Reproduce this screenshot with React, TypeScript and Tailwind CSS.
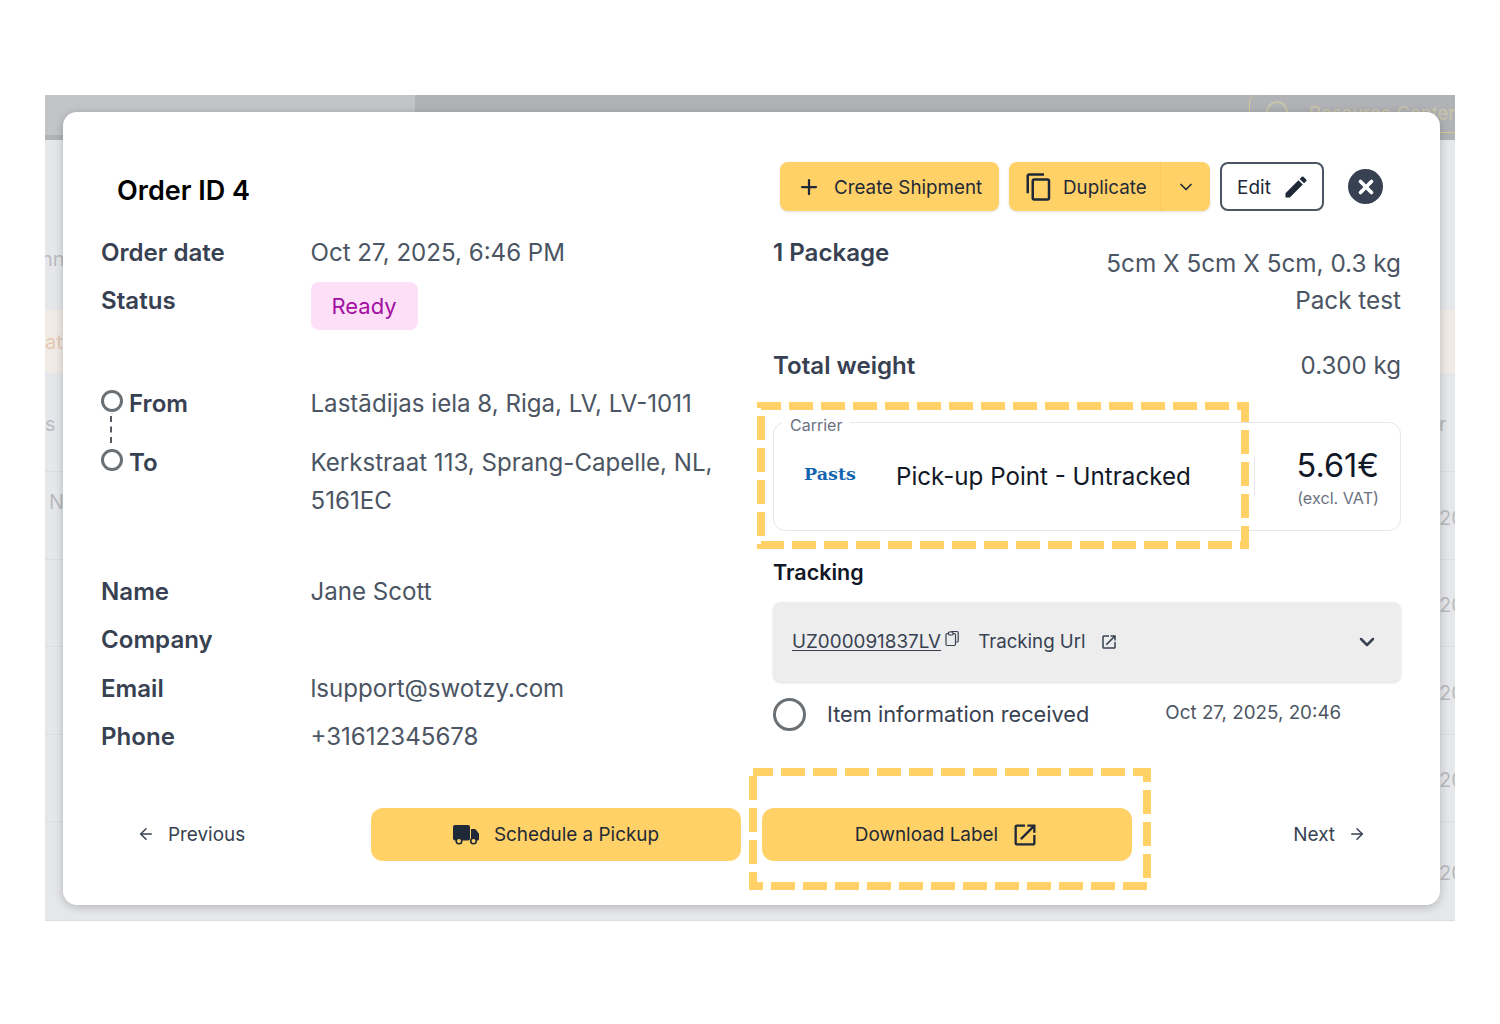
import { ArrowLeft, ArrowRight, ChevronDown, Plus, X } from 'lucide-react';
import { MdContentCopy, MdEdit, MdOpenInNew } from 'react-icons/md';

const bgRows = [
  { left: 's', right: 'r', height: 'h-[99px]' },
  { left: 'N', right: '20', height: 'h-[88px]' },
  { left: '', right: '20', height: 'h-[87px]' },
  { left: '', right: '20', height: 'h-[88px]' },
  { left: '', right: '20', height: 'h-[87px]' },
  { left: '', right: '20', height: 'h-[99px]' },
];

function Backdrop() {
  return (
    <div className="flex h-full flex-col overflow-hidden bg-[#e6e7ea] text-[20px] text-[#b9bbc0]">
      <div className="flex h-[45px] shrink-0 bg-[#b1b2b6]">
        <div className="h-[40px] w-[370px] shrink-0 bg-[#c3c4c7]" />
        <div className="ml-[834px] flex h-[38px] w-[206px] shrink-0 items-start gap-[21px] rounded-tl-lg border-b border-l border-[#d8c998] pl-4 pt-1 text-[18.5px] leading-[24px] whitespace-nowrap text-[#c9c5ab]">
          <span className="mt-[2px] h-[22px] w-[22px] shrink-0 rounded-full border-2 border-[#c9c5ab]" />
          <span className="mt-[2px]">Resource Center</span>
        </div>
      </div>
      <div className="flex h-[170px] shrink-0 justify-between pt-[106px]">
        <span className="-ml-1 leading-[26px]">nn</span>
      </div>
      <div className="flex h-[63px] shrink-0 items-center bg-[#f1ebe5] text-[#e6c9b5]">
        <span className="leading-none">at</span>
      </div>
      {bgRows.map((row, i) => (
        <div key={i} className={`flex shrink-0 items-center justify-between border-b border-[#dcdde1] pt-1 ${row.height}`}>
          <span className={i === 1 ? 'pl-1 -translate-y-4' : ''}>{row.left}</span>
          <span className="-mr-1 w-[20px] overflow-hidden whitespace-nowrap">{row.right}</span>
        </div>
      ))}
    </div>
  );
}

function Label({ children }: { children: React.ReactNode }) {
  return <div className="text-[24.1px] font-semibold leading-[38px] text-[#374151]">{children}</div>;
}

function Info({ label, value }: { label: string; value?: string }) {
  return (
    <div className="grid grid-cols-[209.5px_1fr]">
      <Label>{label}</Label>
      <div className="text-[24.1px] leading-[38px] text-[#4b5563]">{value}</div>
    </div>
  );
}

function Ring() {
  return <span className="h-[22px] w-[22px] shrink-0 -translate-y-[3px] rounded-full border-[3px] border-[#6b7075]" />;
}

function Dashed({ className }: { className: string }) {
  return (
    <svg className={`pointer-events-none absolute ${className}`} width="100%" height="100%">
      <rect x="4" y="4" width="calc(100% - 8px)" height="calc(100% - 8px)" fill="none" stroke="#ffd166" strokeWidth="8" strokeDasharray="24 8" strokeDashoffset="4" />
    </svg>
  );
}

function TruckIcon() {
  return (
    <svg width="27" height="20" viewBox="0 0 27 20" className="text-[#1f2937]">
      <rect x="0" y="0" width="17" height="15.5" rx="2" fill="currentColor" />
      <path d="M18 4h3.6a1.5 1.5 0 0 1 1.2.6l3.2 4.2v5.2a1.5 1.5 0 0 1-1.5 1.5H18z" fill="currentColor" />
      <circle cx="6" cy="16" r="2.8" fill="#ffd166" stroke="currentColor" strokeWidth="1.6" />
      <circle cx="20.5" cy="16" r="2.8" fill="#ffd166" stroke="currentColor" strokeWidth="1.6" />
    </svg>
  );
}

function ClipIcon() {
  return (
    <svg width="16" height="17" viewBox="0 0 16 17" fill="none" stroke="currentColor" strokeWidth="1.2" className="mb-2 ml-[3px] shrink-0">
      <path d="M7 1.5h6.2a1 1 0 0 1 1 1v8.5a1 1 0 0 1-1 1h-1" />
      <rect x="2" y="3.5" width="9.5" height="12" rx="1.2" fill="#ededee" />
      <rect x="4.5" y="2" width="4.5" height="3" rx="0.8" fill="#ededee" />
    </svg>
  );
}

export default function App() {
  return (
    <div className="h-[1024px] bg-white px-[45px] pt-[95px] font-['Inter',sans-serif]">
      <div className="relative h-[826px]">
        <Backdrop />

        {/* Modal */}
        <div className="absolute left-[18px] top-[17px] h-[793px] w-[1377px] rounded-[14px] bg-white pl-[38px] pr-[39px] pt-[50px] shadow-[0_2px_10px_rgba(0,0,0,0.22)]">
          <div className="flex h-[49px] items-center">
            <h1 className="ml-4 mt-[9px] text-[27px] font-semibold text-black">Order ID 4</h1>
            <div className="ml-auto flex items-center text-[#1f2937]">
              <button className="flex h-[49px] w-[219px] items-center gap-[13px] whitespace-nowrap rounded-lg bg-[#ffd166] pl-[17px] text-[18.8px] shadow-sm">
                <Plus className="h-6 w-6" strokeWidth={2.25} />
                <span className="translate-y-[2px]">Create Shipment</span>
              </button>
              <div className="ml-[10px] flex h-[49px] w-[201px] items-center rounded-lg bg-[#ffd166] text-[18.8px] shadow-sm">
                <div className="flex h-full flex-1 items-center gap-[9px] border-r border-[#f7c95e] pl-[15px]">
                  <MdContentCopy className="h-[30px] w-[30px]" />
                  <span className="translate-y-[2px]">Duplicate</span>
                </div>
                <div className="flex w-[49px] justify-center">
                  <ChevronDown className="h-5 w-5" />
                </div>
              </div>
              <button className="ml-[10px] flex h-[49px] w-[104px] items-center gap-[11px] rounded-lg border-2 border-[#4b5563] pl-[15px] text-[19px]">
                <span className="translate-y-[2px]">Edit</span>
                <MdEdit className="h-7 w-7" />
              </button>
              <div className="ml-[24px] mr-[18px] flex h-[35px] w-[35px] items-center justify-center rounded-full bg-[#374151]">
                <X className="h-[22px] w-[22px] text-white" strokeWidth={4} />
              </div>
            </div>
          </div>

          <div className="mt-[23px] grid h-[574px] grid-cols-[672px_628px]">
            <div className="flex flex-col">
              <Info label="Order date" value="Oct 27, 2025, 6:46 PM" />
              <div className="mt-[10px] grid grid-cols-[209.5px_1fr]">
                <Label>Status</Label>
                <div className="flex h-[48px] w-[107px] items-center justify-center rounded-lg bg-[#fde0f8] text-[22px] text-[#a30ea3]">Ready</div>
              </div>

              <div className="relative mt-[55px] grid grid-cols-[209.5px_1fr]">
                <div className="flex items-center gap-[6px]">
                  <Ring />
                  <Label>From</Label>
                </div>
                <div className="text-[24.1px] leading-[38px] text-[#4b5563]">Lastādijas iela 8, Riga, LV, LV-1011</div>
                <span className="absolute left-[9px] top-[31px] h-[27px] border-l-2 border-dashed border-[#555a60]" />
              </div>
              <div className="mt-[21px] grid grid-cols-[209.5px_1fr]">
                <div className="flex h-[38px] items-center gap-[6px]">
                  <Ring />
                  <Label>To</Label>
                </div>
                <div className="w-[420px] text-[24.1px] leading-[38px] text-[#4b5563]">Kerkstraat 113, Sprang-Capelle, NL, 5161EC</div>
              </div>

              <div className="mt-[53px] flex flex-col gap-[10.3px]">
                <Info label="Name" value="Jane Scott" />
                <Info label="Company" />
                <Info label="Email" value="lsupport@swotzy.com" />
                <Info label="Phone" value="+31612345678" />
              </div>
            </div>

            <div className="flex flex-col">
              <div className="flex justify-between">
                <Label>1 Package</Label>
                <div className="pt-[11px] text-right text-[24.3px] leading-[37px] text-[#4b5563]">
                  <div>5cm X 5cm X 5cm, 0.3 kg</div>
                  <div>Pack test</div>
                </div>
              </div>
              <div className="mt-[28px] flex justify-between">
                <Label>Total weight</Label>
                <div className="text-[24.1px] leading-[38px] text-[#4b5563]">0.300 kg</div>
              </div>

              <div className="relative mt-[37px] flex h-[109px] items-center rounded-xl border border-[#e5e7eb]">
                <span className="absolute -top-[10px] left-[8px] bg-white px-2 text-[16px] leading-[24px] text-[#6b7280]">Carrier</span>
                <span className="ml-[30px] mt-[-4px] w-[92px] font-['DejaVu_Serif',serif] text-[17.5px] font-bold text-[#1566b0]">Pasts</span>
                <span className="mt-[1px] whitespace-nowrap text-[24.15px] text-[#111827]">Pick-up Point - Untracked</span>
                <div className="ml-[63px] h-[40px] border-l border-[#e5e7eb]" />
                <div className="ml-auto mr-[21px] flex flex-col items-end">
                  <span className="text-[32.5px] leading-[40px] text-[#111827]">5.61€</span>
                  <span className="mt-[2px] text-[16.2px] leading-[20px] text-[#6b7280]">(excl. VAT)</span>
                </div>
              </div>

              <div className="mt-[26px] text-[21.5px] font-semibold leading-[30px] text-[#111827]">Tracking</div>
              <div className="mt-[15px] flex h-[80px] items-center rounded-lg bg-[#ededee] pl-[19px] pr-[22px] text-[18.7px] text-[#374151] shadow-sm">
                <span className="text-[18.85px] underline underline-offset-2">UZ000091837LV</span>
                <ClipIcon />
                <span className="ml-[18px]">Tracking Url</span>
                <MdOpenInNew className="ml-[14px] h-[18px] w-[18px]" />
                <ChevronDown className="ml-auto h-6 w-6" strokeWidth={2.5} />
              </div>
              <div className="mt-[16px] flex items-center">
                <span className="h-[33px] w-[33px] shrink-0 rounded-full border-[3px] border-[#6b7075]" />
                <span className="ml-[21px] whitespace-nowrap text-[21.75px] text-[#374151]">Item information received</span>
                <span className="ml-[76px] -translate-y-[1px] whitespace-nowrap text-[18.8px] text-[#4b5563]">Oct 27, 2025, 20:46</span>
              </div>
            </div>
          </div>

          <div className="flex h-[53px] items-center text-[18.9px] text-[#1f2937]">
            <button className="flex w-[270px] items-center gap-[13px] pl-[36px] text-[#374151]">
              <ArrowLeft className="h-[18px] w-[18px]" />
              <span className="translate-y-[1px]">Previous</span>
            </button>
            <button className="flex h-[53px] w-[370px] items-center justify-center gap-[14px] rounded-xl bg-[#ffd166]">
              <TruckIcon />
              <span className="translate-y-[1px]">Schedule a Pickup</span>
            </button>
            <button className="ml-[21px] flex h-[53px] w-[370px] items-center justify-center gap-[13px] rounded-xl bg-[#ffd166]">
              <span className="translate-y-[1px]">Download Label</span>
              <MdOpenInNew className="h-[28px] w-[28px]" />
            </button>
            <button className="ml-auto flex items-center gap-[13px] pr-[35px] text-[#374151]">
              <span className="translate-y-[1px]">Next</span>
              <ArrowRight className="h-[18px] w-[18px]" />
            </button>
          </div>
        </div>

        {/* Annotation boxes */}
        <div className="absolute left-[712px] top-[307px] h-[147px] w-[492px]">
          <Dashed className="inset-0" />
        </div>
        <div className="absolute left-[704px] top-[673px] h-[122px] w-[402px]">
          <Dashed className="inset-0" />
        </div>
      </div>
    </div>
  );
}
